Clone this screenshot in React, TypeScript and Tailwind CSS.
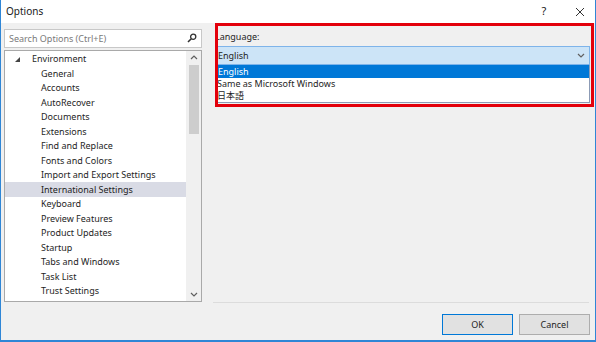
import React from "react";

const items = [
  "General",
  "Accounts",
  "AutoRecover",
  "Documents",
  "Extensions",
  "Find and Replace",
  "Fonts and Colors",
  "Import and Export Settings",
  "International Settings",
  "Keyboard",
  "Preview Features",
  "Product Updates",
  "Startup",
  "Tabs and Windows",
  "Task List",
  "Trust Settings",
  "Web Browser",
];

const font = { fontFamily: '"Segoe UI", "Noto Sans", "Noto Sans CJK JP", sans-serif' };

function Chevron({ up = false, className = "" }: { up?: boolean; className?: string }) {
  return (
    <svg width="8" height="5" viewBox="0 0 8 5" className={className}>
      <polyline
        points={up ? "1,4 4,1 7,4" : "1,1 4,4 7,1"}
        fill="none"
        stroke="#606060"
        strokeWidth="1.2"
      />
    </svg>
  );
}

export default function App() {
  return (
    <div
      className="relative w-[596px] h-[342px] bg-[#f0f0f0] border-x border-b-2 border-[#2f86d6] text-[#1e1e1e] overflow-hidden flex flex-col"
      style={font}
    >
      {/* title bar */}
      <div className="h-[23px] shrink-0 bg-white flex items-center pl-[5px] text-[10px] text-[#202020]">
        <span className="flex-1">Options</span>
        <span className="w-[20px] text-center text-[11px] mr-[21px]">?</span>
        <svg width="10" height="10" viewBox="0 0 10 10" className="mr-[10px]">
          <path d="M1 1 L9 9 M9 1 L1 9" stroke="#333" strokeWidth="1" />
        </svg>
      </div>

      <div className="flex flex-1 min-h-0">
        {/* left column */}
        <div className="w-[210px] shrink-0 pl-[3px] pt-[6px] flex flex-col gap-[2px]">
          <div className="w-[198px] h-[19px] bg-white border border-[#c8c8c8] flex items-center pl-[4px] pr-[4px] text-[9px] text-[#7a7a7a]">
            <span className="flex-1">Search Options (Ctrl+E)</span>
            <svg width="10" height="10" viewBox="0 0 10 10">
              <circle cx="6.2" cy="3.8" r="2.6" fill="none" stroke="#333" strokeWidth="1.3" />
              <path d="M4.3 5.7 L1 9" stroke="#333" strokeWidth="1.6" />
            </svg>
          </div>
          <div className="w-[198px] h-[256px] bg-white border border-[#a9a9a9] flex overflow-hidden">
            <div className="flex-1 pt-[1px] text-[9px]">
              <div className="h-[14.5px] flex items-center">
                <svg width="5" height="5" viewBox="0 0 5 5" className="ml-[10px] mr-[12px]">
                  <polygon points="5,0 5,5 0,5" fill="#444" />
                </svg>
                <span>Environment</span>
              </div>
              {items.map((t) => (
                <div
                  key={t}
                  className={`h-[14.5px] flex items-center pl-[36px] ${
                    t === "International Settings" ? "bg-[#d9dbe5]" : ""
                  }`}
                >
                  {t}
                </div>
              ))}
            </div>
            <div className="w-[15px] shrink-0 bg-[#f0f0f0] flex flex-col items-center">
              <div className="h-[14px] flex items-center">
                <Chevron up />
              </div>
              <div className="w-[10px] h-[69px] bg-[#cdcdcd]" />
              <div className="flex-1" />
              <div className="h-[14px] flex items-center">
                <Chevron />
              </div>
            </div>
          </div>
        </div>

        {/* right pane */}
        <div className="flex-1 flex flex-col pl-[4px] pr-[5px]">
          <div className="h-[19px] mt-[4px] flex items-center text-[9px]">Language:</div>
          <div className="h-[19px] bg-[#cce4f7] border border-[#7eb4ea] flex items-center pl-[2px] pr-[4px] text-[9px]">
            <span className="flex-1">English</span>
            <Chevron />
          </div>
          <div className="h-[38px] bg-white border border-[#8c9bb5] border-t-0 text-[9px] leading-[12px]">
            <div className="h-[13px] bg-[#0078d7] text-white flex items-center pl-[2px]">English</div>
            <div className="h-[12px] flex items-center pl-[1px]">Same as Microsoft Windows</div>
            <div className="h-[12px] flex items-center pl-[1px]">日本語</div>
          </div>
        </div>
      </div>

      {/* footer */}
      <div className="shrink-0 h-[38px] flex flex-col">
        <div className="ml-[212px] mr-[6px] h-px bg-[#dcdcdc]" />
        <div className="flex justify-end gap-[6px] pr-[5px] pt-[11px] text-[9px]">
          <button className="w-[71px] h-[21px] bg-[#e1e1e1] border border-[#0078d7]">OK</button>
          <button className="w-[71px] h-[21px] bg-[#e1e1e1] border border-[#adadad]">Cancel</button>
        </div>
      </div>

      {/* red annotation box */}
      <div className="absolute left-[214px] top-[23px] w-[379px] h-[84px] border-[3px] border-[#e3000b]" />
    </div>
  );
}
